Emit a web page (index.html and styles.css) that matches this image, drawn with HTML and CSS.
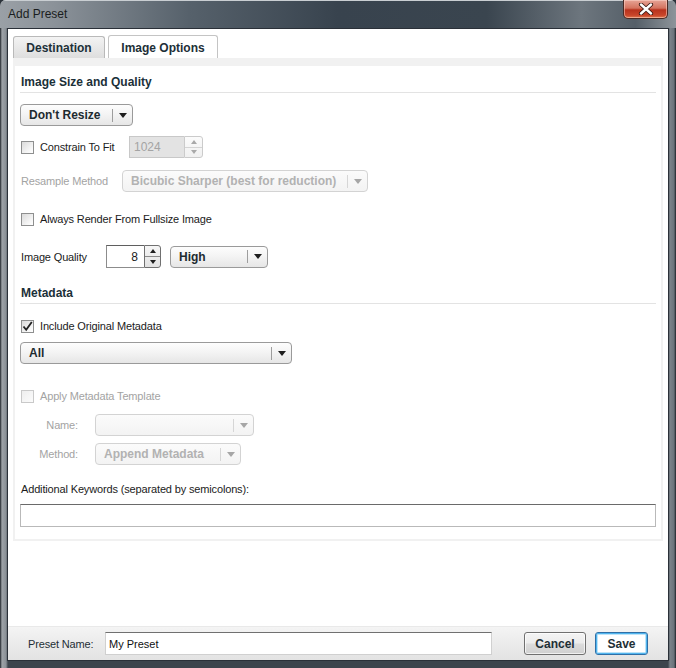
FILE: index.html
```html
<!DOCTYPE html>
<html>
<head>
<meta charset="utf-8">
<link rel="stylesheet" href="styles.css">
</head>
<body>
<div class="window">
  <div class="titlebar">
    <span class="title">Add Preset</span>
    <div class="close">
      <svg width="16" height="12" viewBox="0 0 16 12"><path d="M3 1.5 L13 10.5 M13 1.5 L3 10.5" stroke="#3a1a14" stroke-width="4.2" stroke-linecap="round"/><path d="M3 1.5 L13 10.5 M13 1.5 L3 10.5" stroke="#ffffff" stroke-width="2.4" stroke-linecap="round"/></svg>
    </div>
  </div>
  <div class="client">
    <div class="tabs">
      <div class="tab">Destination</div>
      <div class="tab active">Image Options</div>
    </div>
    <div class="panel">
      <div class="panel-inner">
        <div class="section-head first">Image Size and Quality</div>

        <div class="row r-resize">
          <div class="dd w-resize"><span class="val">Don't Resize</span><span class="arr"><i class="tri"></i></span></div>
        </div>

        <div class="row r-constrain">
          <span class="cb"></span>
          <span class="lbl l-constrain">Constrain To Fit</span>
          <div class="spin disabled">
            <span class="num w-num1">1024</span>
            <span class="btns"><span class="up"><i class="t-up"></i></span><span class="dn"><i class="t-dn"></i></span></span>
          </div>
        </div>

        <div class="row r-resample">
          <span class="lbl dis l-resample">Resample Method</span>
          <div class="dd disabled w-resample"><span class="val">Bicubic Sharper (best for reduction)</span><span class="arr"><i class="tri"></i></span></div>
        </div>

        <div class="row r-render">
          <span class="cb"></span>
          <span class="lbl">Always Render From Fullsize Image</span>
        </div>

        <div class="row r-quality">
          <span class="lbl l-quality">Image Quality</span>
          <div class="spin">
            <span class="num w-num2">8</span>
            <span class="btns"><span class="up"><i class="t-up"></i></span><span class="dn"><i class="t-dn"></i></span></span>
          </div>
          <div class="dd w-high"><span class="val">High</span><span class="arr"><i class="tri"></i></span></div>
        </div>

        <div class="section-head second">Metadata</div>

        <div class="row r-include">
          <span class="cb checked"><svg width="11" height="11" viewBox="0 0 11 11"><path d="M1.5 5.5 L4.2 8.8 L9.8 1" fill="none" stroke="#222" stroke-width="1.8"/></svg></span>
          <span class="lbl">Include Original Metadata</span>
        </div>

        <div class="row r-all">
          <div class="dd w-all"><span class="val">All</span><span class="arr"><i class="tri"></i></span></div>
        </div>

        <div class="row r-apply">
          <span class="cb disabled"></span>
          <span class="lbl dis">Apply Metadata Template</span>
        </div>

        <div class="row r-name">
          <span class="lbl dis l-sub">Name:</span>
          <div class="dd disabled w-name"><span class="val"></span><span class="arr"><i class="tri"></i></span></div>
        </div>

        <div class="row r-method">
          <span class="lbl dis l-sub">Method:</span>
          <div class="dd disabled w-method"><span class="val">Append Metadata</span><span class="arr"><i class="tri"></i></span></div>
        </div>

        <div class="row r-kwlabel">
          <span class="lbl">Additional Keywords (separated by semicolons):</span>
        </div>
        <div class="textbox kw"></div>
      </div>
    </div>
    <div class="spacer"></div>
    <div class="footer">
      <span class="lbl f-lbl">Preset Name:</span>
      <div class="textbox preset">My Preset</div>
      <div class="btn cancel">Cancel</div>
      <div class="btn save">Save</div>
    </div>
  </div>
</div>
</body>
</html>
```
FILE: styles.css
```css
html, body {
  margin: 0;
  padding: 0;
  background: #2b323a;
}
body {
  font-family: "Liberation Sans", Arial, sans-serif;
  font-size: 11px;
  color: #1b1b1b;
}
.window {
  width: 676px;
  height: 668px;
  box-sizing: border-box;
  display: flex;
  flex-direction: column;
  background: linear-gradient(90deg, #1d2228 0px, #9ea3a8 2px, #8a9096 6px, #3c444c 8px, #3c444c 668px, #7b838a 670px, #6a737b 674px, #1d2228 676px);
  border-radius: 6px 6px 0 0;
  overflow: hidden;
}
.titlebar {
  height: 28px;
  flex: none;
  display: flex;
  align-items: flex-start;
  justify-content: space-between;
  background: linear-gradient(90deg, #9aa0a6 0%, #8b9299 8%, #56616b 28%, #38434e 50%, #3a454f 72%, #6d767e 86%, #555f68 94%, #8d949a 100%);
  box-shadow: inset 0 1px 0 #c9ced2;
}
.title {
  font-family: "Liberation Sans", Arial, sans-serif;
  font-size: 12px;
  color: #1a1d20;
  margin: 7px 0 0 8px;
}
.close {
  width: 45px;
  height: 19px;
  margin-right: 8px;
  box-sizing: border-box;
  border: 1px solid #4a2a24;
  border-top: none;
  border-radius: 0 0 5px 5px;
  background: linear-gradient(#e6a496 0%, #d4735f 45%, #b8321d 55%, #c9452a 85%, #e07a4e 100%);
  display: flex;
  align-items: center;
  justify-content: center;
  box-shadow: inset 0 0 0 1px rgba(255,220,210,0.5);
}
.client {
  flex: 1;
  margin: 0 7px 7px 7px;
  border: 1px solid #2a3038;
  background: #ffffff;
  display: flex;
  flex-direction: column;
}
.tabs {
  display: flex;
  align-items: flex-end;
  gap: 3px;
  margin: 6px 0 0 5px;
  height: 23px;
}
.tab {
  width: 92px;
  height: 22px;
  box-sizing: border-box;
  border: 1px solid #b9b9b9;
  border-bottom: none;
  border-radius: 3px 3px 0 0;
  background: linear-gradient(#f3f3f3, #dedede);
  font-weight: bold;
  font-size: 12px;
  color: #1d3038;
  display: flex;
  align-items: center;
  justify-content: center;
  padding-top: 1px;
}
.tab.active {
  width: 110px;
  height: 23px;
  background: #ffffff;
  border-color: #c4c4c4;
  padding-top: 2px;
}
.panel {
  margin: 0 5px;
  border: 2px solid #f1f1f1;
  border-top: 8px solid #f1f1f1;
  background: #ffffff;
}
.panel-inner {
  padding: 0 5px 12px 5px;
}
.section-head {
  font-weight: bold;
  font-size: 12px;
  color: #1b3038;
  line-height: 14px;
  padding: 0 0 3px 1px;
  border-bottom: 1px solid #e3e3e3;
}
.section-head.first { margin-top: 9px; }
.section-head.second { margin-top: 18px; }
.row {
  display: flex;
  align-items: center;
}
.lbl {
  line-height: 14px;
  white-space: nowrap;
  letter-spacing: -0.15px;
}
.lbl.dis { color: #a3a3a3; }
.cb {
  width: 13px;
  height: 13px;
  box-sizing: border-box;
  border: 1px solid #8e8f8f;
  background: linear-gradient(135deg, #dadada, #f6f6f6 70%, #ffffff);
  margin: 0 6px 0 1px;
  flex: none;
  display: flex;
  align-items: center;
  justify-content: center;
}
.cb.disabled {
  border-color: #c9c9c9;
  background: linear-gradient(135deg, #eeeeee, #fbfbfb);
}
.dd {
  height: 22px;
  box-sizing: border-box;
  border: 1px solid #9a9a9a;
  border-radius: 4px;
  background: linear-gradient(#fdfdfd, #f4f4f4 45%, #e6e6e6);
  display: flex;
  align-items: center;
  font-weight: bold;
  font-size: 12px;
  color: #1d2b30;
  flex: none;
}
.dd .val {
  flex: 1;
  padding-left: 8px;
  white-space: nowrap;
  overflow: hidden;
}
.dd .arr {
  width: 19px;
  height: 13px;
  border-left: 1px solid #9d9d9d;
  display: flex;
  align-items: center;
  justify-content: center;
}
.tri {
  width: 0;
  height: 0;
  border-left: 4px solid transparent;
  border-right: 4px solid transparent;
  border-top: 5px solid #1e1e1e;
}
.dd.disabled {
  border-color: #d3d3d3;
  background: linear-gradient(#fbfbfb, #f3f3f3);
  color: #b2b2b2;
}
.dd.disabled .arr { border-left-color: #d6d6d6; }
.dd.disabled .tri { border-top-color: #a6a6a6; }

.w-resize { width: 113px; }
.w-resample { width: 246px; }
.w-high { width: 98px; margin-left: 9px; }
.w-all { width: 272px; }
.w-name { width: 159px; }
.w-method { width: 146px; }

.spin {
  display: flex;
  flex: none;
}
.num {
  box-sizing: border-box;
  height: 23px;
  border: 1px solid #8c8c8c;
  border-top-color: #5f5f5f;
  border-right: none;
  background: #ffffff;
  display: flex;
  align-items: center;
  justify-content: flex-end;
  padding-right: 6px;
  font-size: 12px;
  color: #1b1b1b;
}
.w-num2 { width: 38px; }
.btns {
  width: 17px;
  height: 23px;
  box-sizing: border-box;
  border: 1px solid #707070;
  border-radius: 0 3px 3px 0;
  background: linear-gradient(#f6f6f6, #e2e2e2);
  display: flex;
  flex-direction: column;
}
.btns .up, .btns .dn {
  flex: 1;
  display: flex;
  align-items: center;
  justify-content: center;
}
.btns .up { border-bottom: 1px solid #8a8a8a; }
.t-up, .t-dn {
  width: 0;
  height: 0;
  border-left: 3.5px solid transparent;
  border-right: 3.5px solid transparent;
}
.t-up { border-bottom: 4px solid #1e1e1e; }
.t-dn { border-top: 4px solid #1e1e1e; }
.spin.disabled .num {
  width: 55px;
  height: 22px;
  border-color: #c8c8c8;
  background: #e3e3e3;
  color: #a4a4a4;
  justify-content: flex-start;
  padding: 0 0 0 4px;
}
.spin.disabled .btns {
  width: 19px;
  height: 22px;
  border-color: #cbcbcb;
  background: linear-gradient(#fbfbfb, #f0f0f0);
}
.spin.disabled .btns .up { border-bottom-color: #d4d4d4; }
.spin.disabled .t-up { border-bottom-color: #a9a9a9; }
.spin.disabled .t-dn { border-top-color: #a9a9a9; }

.r-resize { margin-top: 11px; }
.r-constrain { margin-top: 10px; }
.l-constrain { width: 89px; }
.r-resample { margin-top: 12px; }
.l-resample { width: 102px; padding-left: 1px; box-sizing: border-box; }
.r-render { margin-top: 20px; }
.r-quality { margin-top: 19px; }
.l-quality { width: 86px; padding-left: 1px; box-sizing: border-box; }
.r-include { margin-top: 15px; }
.r-all { margin-top: 9px; }
.r-apply { margin-top: 25px; }
.r-name { margin-top: 11px; }
.r-method { margin-top: 7px; }
.l-sub { width: 58px; text-align: right; margin-right: 17px; }
.r-kwlabel { margin-top: 17px; padding-left: 1px; }

.textbox {
  box-sizing: border-box;
  height: 23px;
  border: 1px solid #b9b9b9;
  border-top-color: #6a6a6a;
  background: #ffffff;
}
.kw { margin-top: 8px; }

.spacer { flex: 1; }
.footer {
  height: 34px;
  flex: none;
  display: flex;
  align-items: center;
  background: linear-gradient(#f4f4f4, #ebebeb 50%, #e3e3e3);
  border-top: 1px solid #e9e9e9;
  box-sizing: border-box;
}
.f-lbl {
  width: 97px;
  padding-left: 20px;
  box-sizing: border-box;
  color: #1f2f36;
}
.preset {
  width: 387px;
  display: flex;
  align-items: center;
  padding-left: 3px;
  font-size: 11px;
  color: #111;
  border-color: #d0d0d0;
  border-top-color: #707070;
}
.btn {
  height: 23px;
  box-sizing: border-box;
  border: 1px solid #707070;
  border-radius: 3px;
  background: linear-gradient(#f4f4f4 0%, #ececec 48%, #dcdcdc 52%, #d0d0d0 100%);
  font-weight: bold;
  font-size: 12px;
  color: #1e2f36;
  display: flex;
  align-items: center;
  justify-content: center;
  box-shadow: inset 0 0 0 1px rgba(255,255,255,0.7);
}
.cancel { width: 62px; margin-left: 32px; }
.save {
  width: 53px;
  margin-left: 9px;
  border-color: #2f6fa6;
  background: #ffffff;
  box-shadow: inset 0 0 0 1px #4fb4ee, inset 0 0 0 2px #bfe4f8;
}
```
